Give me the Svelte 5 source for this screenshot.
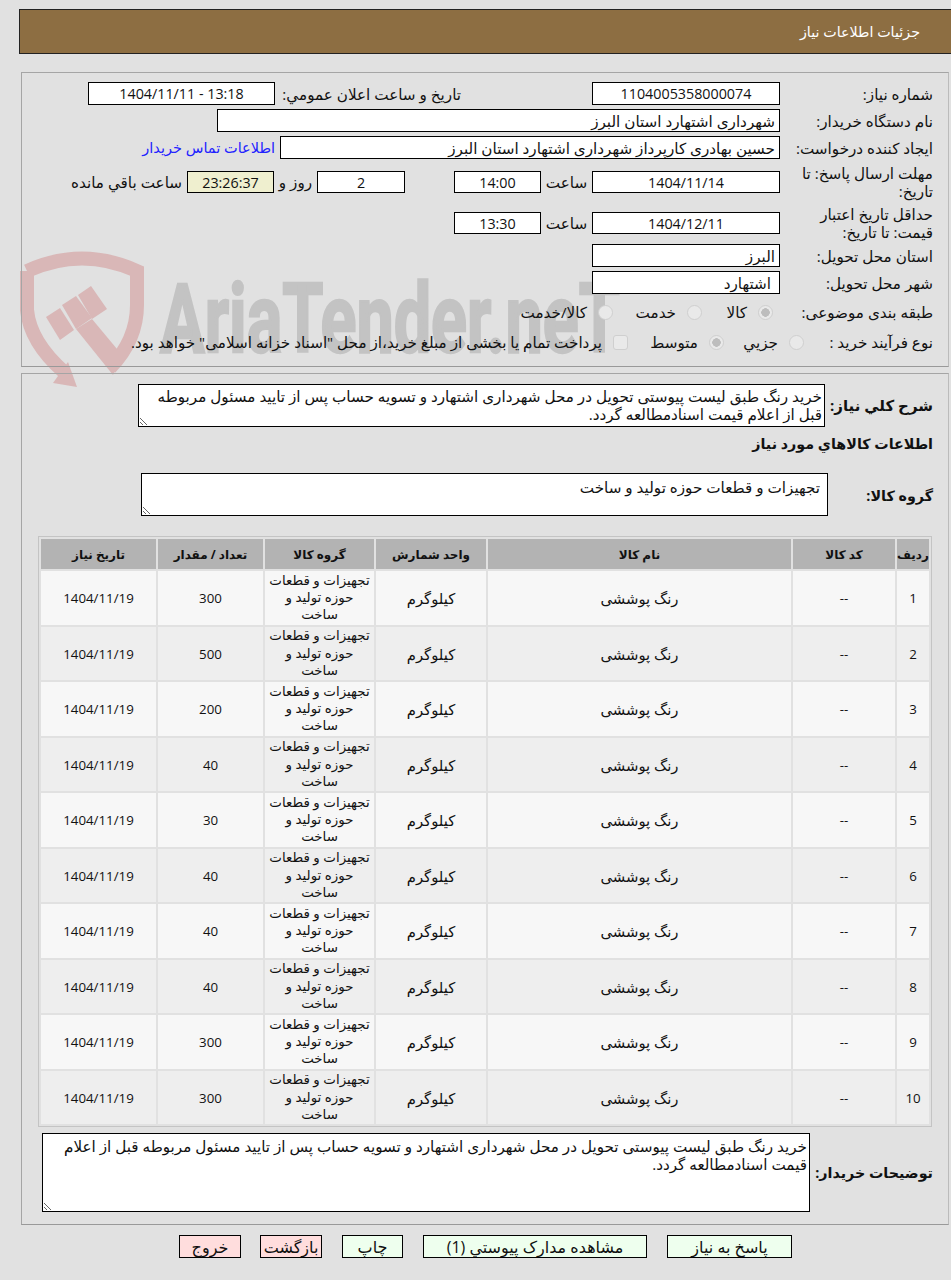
<script>
  const desc = 'خرید رنگ طبق لیست پیوستی تحویل در محل شهرداری اشتهارد و تسویه حساب پس از تایید مسئول مربوطه قبل از اعلام قیمت اسنادمطالعه گردد.';
  const group = 'تجهیزات و قطعات حوزه تولید و ساخت';
  const counts = [300, 500, 200, 40, 30, 40, 40, 40, 300, 300];
  const rows = counts.map((qty, i) => ({ n: i + 1, qty }));
</script>

<div class="page">
  <svg class="watermark" width="640" height="400" viewBox="0 0 640 400" aria-hidden="true">
    <g fill="none" stroke="#d9b7b7" stroke-width="14">
      <path d="M27 271 Q82 246 137 271 V305 Q137 340 110 368" />
      <path d="M27 271 V310 Q30 342 64 372" />
    </g>
    <g fill="#d9b7b7">
      <polygon points="53,383 68,362 77,387" />
      <polygon points="46,317 60,308 74,330 60,340" />
      <polygon points="62,305 76,296 92,318 76,329" />
      <polygon points="78,295 91,286 107,309 92,319" />
      <polygon points="76,329 92,319 122,355 113,375" />
    </g>
    <text class="wm-text" x="160" y="352" textLength="460" lengthAdjust="spacingAndGlyphs">AriaTender.neT</text>
  </svg>

  <header class="title">جزئیات اطلاعات نیاز</header>

  <section class="panel info">
    <div class="row">
      <label class="lbl">شماره نیاز:</label>
      <input class="f-main center num" readonly value="1104005358000074" />
      <label class="lbl-pub">تاریخ و ساعت اعلان عمومي:</label>
      <input class="f-pub center num" readonly value="13:18 - 1404/11/11" />
    </div>
    <div class="row">
      <label class="lbl">نام دستگاه خریدار:</label>
      <input class="f-buyer" readonly value="شهرداری اشتهارد استان البرز" />
    </div>
    <div class="row">
      <label class="lbl">ایجاد کننده درخواست:</label>
      <input class="f-creator" readonly value="حسین بهادری کارپرداز شهرداری اشتهارد استان البرز" />
      <a class="contact" href="#contact">اطلاعات تماس خریدار</a>
    </div>
    <div class="row two first">
      <label class="lbl">مهلت ارسال پاسخ: تا<br />تاریخ:</label>
      <input class="f-main center num" readonly value="1404/11/14" />
      <span class="hour">ساعت</span>
      <input class="f-time center num" readonly value="14:00" />
      <input class="f-days center num" readonly value="2" />
      <span class="days">روز و</span>
      <input class="f-left center num" readonly value="23:26:37" />
      <span class="left">ساعت باقي مانده</span>
    </div>
    <div class="row two">
      <label class="lbl">حداقل تاریخ اعتبار<br />قیمت: تا تاریخ:</label>
      <input class="f-main center num" readonly value="1404/12/11" />
      <span class="hour">ساعت</span>
      <input class="f-time center num" readonly value="13:30" />
    </div>
    <div class="row">
      <label class="lbl">استان محل تحویل:</label>
      <input class="f-main" readonly value="البرز" />
    </div>
    <div class="row">
      <label class="lbl">شهر محل تحویل:</label>
      <input class="f-main city" readonly value="اشتهارد" />
    </div>
    <div class="row opts cat">
      <label class="lbl">طبقه بندی موضوعی:</label>
      <span class="opt o1"><input type="radio" name="cat" disabled checked />کالا</span>
      <span class="opt o2"><input type="radio" name="cat" disabled />خدمت</span>
      <span class="opt o3"><input type="radio" name="cat" disabled />کالا/خدمت</span>
    </div>
    <div class="row opts proc">
      <label class="lbl">نوع فرآیند خرید :</label>
      <span class="opt o4"><input type="radio" name="proc" disabled />جزيي</span>
      <span class="opt o5"><input type="radio" name="proc" disabled checked />متوسط</span>
      <span class="opt o6"><input type="checkbox" disabled />پرداخت تمام یا بخشی از مبلغ خرید،از محل "اسناد خزانه اسلامی" خواهد بود.</span>
    </div>
  </section>

  <section class="panel detail">
    <div class="row desc-row">
      <label class="blbl">شرح کلي نیاز:</label>
      <textarea class="ta-desc" readonly value={desc}></textarea>
    </div>
    <h2 class="heading">اطلاعات کالاهاي مورد نیاز</h2>
    <div class="row group-row">
      <label class="blbl g">گروه کالا:</label>
      <textarea class="ta-group" readonly value={group}></textarea>
    </div>

    <table>
      <colgroup>
        <col style="width:32px" /><col style="width:102px" /><col style="width:303px" /><col style="width:110px" /><col style="width:109px" /><col style="width:105px" /><col style="width:115px" />
      </colgroup>
      <thead>
        <tr>
          <th>ردیف</th><th>کد کالا</th><th>نام کالا</th><th>واحد شمارش</th><th>گروه کالا</th><th>تعداد / مقدار</th><th>تاریخ نیاز</th>
        </tr>
      </thead>
      <tbody>
        {#each rows as r (r.n)}
          <tr>
            <td class="num">{r.n}</td>
            <td class="num">--</td>
            <td>رنگ پوششی</td>
            <td>کیلوگرم</td>
            <td class="grp">تجهیزات و قطعات<br />حوزه تولید و<br />ساخت</td>
            <td class="num">{r.qty}</td>
            <td class="num">1404/11/19</td>
          </tr>
        {/each}
      </tbody>
    </table>

    <div class="row note-row">
      <label class="blbl n">توضیحات خریدار:</label>
      <textarea class="ta-note" readonly value={desc}></textarea>
    </div>
  </section>

  <div class="actions">
    <button class="ok b1">پاسخ به نیاز</button>
    <button class="ok b2">مشاهده مدارک پیوستي (1)</button>
    <button class="ok b3">چاپ</button>
    <button class="no b4">بازگشت</button>
    <button class="no b5">خروج</button>
  </div>
</div>

<style>
  :global(body) {
    background: #e1e1e1;
  }

  .page {
    position: relative;
    direction: rtl;
    width: 951px;
    height: 1280px;
    padding-top: 9px;
    box-sizing: border-box;
    overflow: hidden;
    font-family: "Open Sans", "DejaVu Sans", sans-serif;
    font-size: 15.2px;
    color: #111;
  }

  .watermark {
    position: absolute;
    left: 0;
    top: 0;
    direction: ltr;
  }

  .wm-text {
    font-family: Roboto, sans-serif;
    font-weight: 700;
    font-size: 97px;
    fill: #c3c3c3;
    stroke: #c3c3c3;
    stroke-width: 2.5px;
  }

  .title {
    position: relative;
    margin-left: 19px;
    height: 43px;
    line-height: 43px;
    padding-right: 31px;
    background: #8d6e42;
    border: solid #222;
    border-width: 1px 0 1px 1px;
    font-size: 14.3px;
    color: #fff;
  }

  .panel {
    position: relative;
    box-sizing: border-box;
    margin: 0 2px 0 21px;
    width: 928px;
    border: 1px solid #a5a5a5;
    border-right-color: #bbb;
    border-bottom-color: #999;
  }

  .info {
    margin-top: 18px;
    height: 295px;
    padding-top: 9px;
  }

  .detail {
    margin-top: 6px;
    height: 852px;
    padding: 10px 16px 0 16px;
  }

  .row {
    display: flex;
    align-items: center;
    margin-bottom: 4px;
    height: 23px;
  }

  .row.two {
    height: 34px;
    margin-bottom: 4px;
  }

  .row.two.first {
    margin-top: 6px;
    margin-bottom: 7px;
  }

  .row.opts {
    height: 24px;
  }

  .row.cat {
    margin-top: 6px;
    margin-bottom: 6px;
  }

  .lbl {
    box-sizing: border-box;
    width: 168px;
    flex: none;
    padding-right: 15px;
    line-height: 18px;
    white-space: nowrap;
  }

  .proc .lbl {
    width: 144px;
  }

  .lbl-pub {
    width: 317px;
    flex: none;
    box-sizing: border-box;
    padding-right: 131px;
    white-space: nowrap;
  }

  input:not([type]) {
    box-sizing: border-box;
    height: 23px;
    padding: 0 4px;
    border: 1px solid #000;
    background: #fff;
    font: inherit;
    color: #111;
    outline: none;
    flex: none;
  }

  .row.two input {
    height: 22px;
  }

  input.num {
    font-size: 14.3px;
  }

  td.num {
    font-size: 13.3px;
  }

  .center {
    text-align: center;
  }

  .f-main {
    width: 188px;
  }

  input.city {
    padding-right: 8px;
  }

  .f-pub {
    width: 187px;
  }

  .f-buyer {
    width: 563px;
  }

  .f-creator {
    width: 500px;
  }

  .f-time {
    width: 87px;
  }

  .f-days {
    width: 88px;
    margin-right: 49px;
  }

  input.f-left {
    width: 87px;
    background: #efefcf;
  }

  .hour {
    width: 51px;
    flex: none;
    text-align: center;
  }

  .days {
    width: 43px;
    flex: none;
    text-align: center;
  }

  .left {
    margin-right: 5px;
    white-space: nowrap;
  }

  .contact {
    margin-right: 5px;
    font-size: 14.5px;
    color: #2222ff;
    text-decoration: none;
    white-space: nowrap;
  }

  .opt {
    display: flex;
    align-items: center;
    gap: 11px;
    white-space: nowrap;
    flex: none;
    box-sizing: border-box;
  }

  .opt input {
    appearance: none;
    box-sizing: border-box;
    width: 15px;
    height: 15px;
    margin: 0;
    border: 1px solid #cfcfcf;
    border-radius: 50%;
    background: #e9e9e9;
    flex: none;
  }

  .opt input:checked {
    background: radial-gradient(circle, #bdbdbd 0 4px, #e9e9e9 4.5px);
  }

  .opt input[type="checkbox"] {
    border-radius: 3px;
  }

  .o1 {
    margin-right: 7px;
    width: 71px;
  }

  .o2 {
    width: 89px;
  }

  .o4 {
    width: 80px;
  }

  .o5 {
    width: 96px;
  }

  .blbl {
    font-size: 14.3px;
    font-weight: 700;
    flex: none;
    white-space: nowrap;
    margin-right: -1px;
  }

  .desc-row {
    height: 43px;
    margin: 0;
  }

  .desc-row .blbl {
    width: 108px;
    margin-top: -2px;
    font-size: 15px;
  }

  .heading {
    margin: 7px -1px 20px 0;
    height: 19px;
    line-height: 19px;
    font-size: 14.3px;
    font-weight: 700;
  }

  .group-row {
    height: 43px;
    margin: 0 0 20px;
  }

  .group-row .blbl {
    width: 105px;
    margin-top: 1px;
  }

  textarea {
    box-sizing: border-box;
    margin: 0;
    padding: 2px 4px;
    border: 1px solid #000;
    border-radius: 0;
    background: #fff;
    font: inherit;
    line-height: 18px;
    color: #111;
    outline: none;
    flex: none;
  }

  .ta-desc {
    width: 687px;
    height: 43px;
    padding: 2px 2px 0;
  }

  .ta-group {
    width: 687px;
    height: 43px;
    padding: 4px 7px;
  }

  .note-row {
    height: 79px;
    margin: 6px 0 0;
  }

  .note-row .blbl {
    width: 123px;
    margin-top: 0;
  }

  .ta-note {
    width: 768px;
    height: 79px;
    padding: 3px 2px;
  }

  table {
    width: 894px;
    table-layout: fixed;
    border: 1px solid #c4c4c4;
    border-spacing: 2px;
    text-align: center;
  }

  th {
    height: 30px;
    padding: 0;
    background: #b3b3b3;
    font-size: 12px;
    font-weight: 700;
  }

  td {
    height: 53.5px;
    padding: 2px 0 0;
    background: #f7f7f7;
    font-size: 14.8px;
    line-height: 17.2px;
    box-sizing: border-box;
  }

  td.grp {
    padding: 0;
    font-size: 13.4px;
    white-space: nowrap;
  }

  tbody tr:nth-child(even) td {
    background: #eeeeee;
  }

  .actions {
    position: relative;
    display: flex;
    gap: 20px;
    margin-top: 10px;
    padding-right: 159px;
  }

  button {
    box-sizing: border-box;
    height: 23px;
    padding: 0;
    border: 1px solid #000;
    border-radius: 0;
    font: inherit;
    font-size: 16px;
    color: #111;
  }

  .ok {
    background: #eeffee;
  }

  .no {
    background: #ffdddd;
  }

  .b1 {
    width: 125px;
  }

  .b2 {
    width: 224px;
  }

  .b3 {
    width: 61px;
  }

  .b4 {
    width: 62px;
    margin-left: -1px;
  }

  .b5 {
    width: 62px;
  }
</style>
